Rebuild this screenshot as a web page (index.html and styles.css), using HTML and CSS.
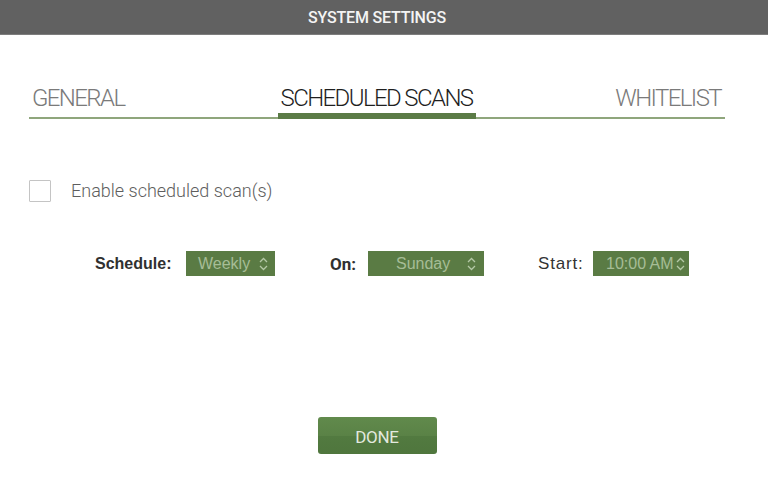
FILE: index.html
```html
<!DOCTYPE html>
<html>
<head>
<meta charset="utf-8">
<link rel="stylesheet" href="styles.css">
</head>
<body>
<div class="header">SYSTEM SETTINGS</div>
<div class="tabs">
  <div class="tab first">GENERAL</div>
  <div class="tab active">SCHEDULED SCANS</div>
  <div class="tab last">WHITELIST</div>
</div>
<div class="option">
  <span class="checkbox"></span>
  <span class="option-label">Enable scheduled scan(s)</span>
</div>
<div class="schedule">
  <div class="field f1">
    <span class="label l1">Schedule:</span>
    <span class="select s1">Weekly<svg class="chev" viewBox="0 0 9 14" width="9" height="14"><path d="M1 5 L4.5 1.5 L8 5 M1 9 L4.5 12.5 L8 9"/></svg></span>
  </div>
  <div class="field f2">
    <span class="label l2">On:</span>
    <span class="select s2">Sunday<svg class="chev" viewBox="0 0 9 14" width="9" height="14"><path d="M1 5 L4.5 1.5 L8 5 M1 9 L4.5 12.5 L8 9"/></svg></span>
  </div>
  <div class="field f3">
    <span class="label l3">Start:</span>
    <span class="select s3">10:00 AM<svg class="chev" viewBox="0 0 9 14" width="9" height="14"><path d="M1 5 L4.5 1.5 L8 5 M1 9 L4.5 12.5 L8 9"/></svg></span>
  </div>
</div>
<div class="actions">
  <button class="done">DONE</button>
</div>
</body>
</html>
```
FILE: styles.css
```css
html, body {
  margin: 0;
  padding: 0;
  background: #ffffff;
}
body {
  font-family: Roboto, "Liberation Sans", sans-serif;
  width: 768px;
  height: 477px;
  overflow: hidden;
}
.header {
  height: 34px;
  background: #616161;
  border-bottom: 1px solid #7d7d7d;
  color: #f4f4f4;
  font-family: Roboto, sans-serif;
  font-weight: 500;
  font-size: 16px;
  letter-spacing: -0.2px;
  line-height: 36px;
  text-align: center;
  padding-right: 14px;
}
.tabs {
  display: grid;
  grid-template-columns: 1fr auto 1fr;
  align-items: end;
  margin: 48px 43px 0 29px;
  border-bottom: 2px solid #8fa67c;
}
.tab {
  font-family: Roboto, sans-serif;
  font-weight: 300;
  font-size: 24px;
  line-height: 30px;
  letter-spacing: -1.6px;
  color: #7a7a7a;
  padding: 0 4px 4px 3px;
}
.tab.first { justify-self: start; }
.tab.last { justify-self: end; }
.tab.active {
  color: #1f1f1f;
  padding-bottom: 0;
  border-bottom: 6px solid #5b7b46;
  margin-bottom: -2px;
}
.option {
  display: flex;
  align-items: center;
  margin: 60px 0 0 29px;
  height: 23px;
}
.checkbox {
  width: 20px;
  height: 20px;
  border: 1.5px solid #c4c4c4;
  border-radius: 1px;
}
.option-label {
  margin-left: 20px;
  font-weight: 300;
  font-size: 18px;
  color: #5e5e5e;
}
.schedule {
  display: flex;
  align-items: center;
  margin: 49px 0 0 95px;
  height: 25px;
}
.field {
  display: flex;
  align-items: center;
}
.f1 { width: 235px; }
.f2 { width: 208px; }
.label {
  font-family: "Liberation Sans", Arial, sans-serif;
  font-weight: bold;
  font-size: 16px;
  color: #303030;
}
.l1 { width: 91px; }
.l2 { width: 38px; font-family: Roboto, sans-serif; font-weight: 700; font-size: 17px; }
.l3 { width: 55px; font-weight: normal; font-size: 17px; letter-spacing: 0.8px; color: #333; }
.select {
  display: flex;
  align-items: center;
  height: 25px;
  background: #5a7b44;
  color: #a6bd96;
  font-family: "Liberation Sans", Arial, sans-serif;
  font-size: 16px;
  box-sizing: border-box;
}
.s1 { width: 89px; padding-left: 12px; }
.s1 .chev { margin-left: 9px; }
.s2 { width: 116px; padding-left: 28px; }
.s2 .chev { margin-left: 17px; }
.s3 { width: 96px; padding-left: 13px; }
.s3 .chev { margin-left: 2px; }
.chev {
  fill: none;
  stroke: #b4c8a6;
  stroke-width: 1.3;
}
.actions {
  margin: 141px 43px 0 29px;
  text-align: center;
}
.done {
  width: 119px;
  height: 37px;
  border: none;
  border-radius: 3px;
  background: linear-gradient(#618a4c 0%, #5a8246 50%, #527a40 52%, #4f763d 100%);
  color: #e3e9df;
  font-family: Roboto, sans-serif;
  font-weight: 400;
  font-size: 17px;
  letter-spacing: -0.3px;
  padding: 0;
  padding-top: 2px;
}
```
